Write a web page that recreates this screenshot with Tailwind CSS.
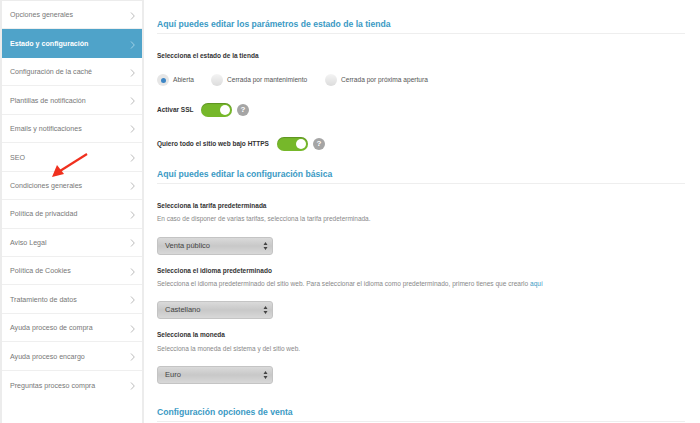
<!DOCTYPE html>
<html lang="es">
<head>
<meta charset="UTF-8" />
<title>Estado y configuración</title>
<script src="https://cdn.jsdelivr.net/npm/@tailwindcss/browser@4"></script>
</head>
<body class="bg-white font-['Liberation_Sans',Arial,sans-serif] text-[#333]">
<div class="flex h-[423px] w-[700px] overflow-hidden">

  <!-- Sidebar -->
  <aside class="w-[144px] h-full shrink-0 border-l-2 border-r-2 border-t border-[#ececec] text-[7.1px] text-[#777]">
    <a class="flex items-center justify-between h-[28.45px] pt-[2px] pl-2 pr-[7px] border-b border-[#efefef]">Opciones generales <svg class="w-[5px] h-[8px]" viewBox="0 0 5 8" fill="none" stroke="#bbb"><path d="M1 .5 4.300 4 1 7.500"/></svg></a>
    <a class="flex items-center justify-between h-[28.45px] pt-[2px] pl-2 pr-[7px] bg-[#4fa3c9] text-white font-bold">Estado y configuración <svg class="w-[5px] h-[8px]" viewBox="0 0 5 8" fill="none" stroke="#9fd0e6"><path d="M1 .5 4.300 4 1 7.500"/></svg></a>
    <a class="flex items-center justify-between h-[28.45px] pt-[2px] pl-2 pr-[7px] border-b border-[#efefef]">Configuración de la caché <svg class="w-[5px] h-[8px]" viewBox="0 0 5 8" fill="none" stroke="#bbb"><path d="M1 .5 4.300 4 1 7.500"/></svg></a>
    <a class="flex items-center justify-between h-[28.45px] pt-[2px] pl-2 pr-[7px] border-b border-[#efefef]">Plantillas de notificación <svg class="w-[5px] h-[8px]" viewBox="0 0 5 8" fill="none" stroke="#bbb"><path d="M1 .5 4.300 4 1 7.500"/></svg></a>
    <a class="flex items-center justify-between h-[28.45px] pt-[2px] pl-2 pr-[7px] border-b border-[#efefef]">Emails y notificaciones <svg class="w-[5px] h-[8px]" viewBox="0 0 5 8" fill="none" stroke="#bbb"><path d="M1 .5 4.300 4 1 7.500"/></svg></a>
    <a class="flex items-center justify-between h-[28.45px] pt-[2px] pl-2 pr-[7px] border-b border-[#efefef]">SEO <svg class="w-[5px] h-[8px]" viewBox="0 0 5 8" fill="none" stroke="#bbb"><path d="M1 .5 4.300 4 1 7.500"/></svg></a>
    <a class="flex items-center justify-between h-[28.45px] pt-[2px] pl-2 pr-[7px] border-b border-[#efefef]">Condiciones generales <svg class="w-[5px] h-[8px]" viewBox="0 0 5 8" fill="none" stroke="#bbb"><path d="M1 .5 4.300 4 1 7.500"/></svg></a>
    <a class="flex items-center justify-between h-[28.45px] pt-[2px] pl-2 pr-[7px] border-b border-[#efefef]">Política de privacidad <svg class="w-[5px] h-[8px]" viewBox="0 0 5 8" fill="none" stroke="#bbb"><path d="M1 .5 4.300 4 1 7.500"/></svg></a>
    <a class="flex items-center justify-between h-[28.45px] pt-[2px] pl-2 pr-[7px] border-b border-[#efefef]">Aviso Legal <svg class="w-[5px] h-[8px]" viewBox="0 0 5 8" fill="none" stroke="#bbb"><path d="M1 .5 4.300 4 1 7.500"/></svg></a>
    <a class="flex items-center justify-between h-[28.45px] pt-[2px] pl-2 pr-[7px] border-b border-[#efefef]">Política de Cookies <svg class="w-[5px] h-[8px]" viewBox="0 0 5 8" fill="none" stroke="#bbb"><path d="M1 .5 4.300 4 1 7.500"/></svg></a>
    <a class="flex items-center justify-between h-[28.45px] pt-[2px] pl-2 pr-[7px] border-b border-[#efefef]">Tratamiento de datos <svg class="w-[5px] h-[8px]" viewBox="0 0 5 8" fill="none" stroke="#bbb"><path d="M1 .5 4.300 4 1 7.500"/></svg></a>
    <a class="flex items-center justify-between h-[28.45px] pt-[2px] pl-2 pr-[7px] border-b border-[#efefef]">Ayuda proceso de compra <svg class="w-[5px] h-[8px]" viewBox="0 0 5 8" fill="none" stroke="#bbb"><path d="M1 .5 4.300 4 1 7.500"/></svg></a>
    <a class="flex items-center justify-between h-[28.45px] pt-[2px] pl-2 pr-[7px] border-b border-[#efefef]">Ayuda proceso encargo <svg class="w-[5px] h-[8px]" viewBox="0 0 5 8" fill="none" stroke="#bbb"><path d="M1 .5 4.300 4 1 7.500"/></svg></a>
    <a class="flex items-center justify-between h-[28.45px] pt-[2px] pl-2 pr-[7px]">Preguntas proceso compra <svg class="w-[5px] h-[8px]" viewBox="0 0 5 8" fill="none" stroke="#bbb"><path d="M1 .5 4.300 4 1 7.500"/></svg></a>
  </aside>

  <!-- Content -->
  <main class="w-[528px] ml-[13px] pt-[17px]">
    <h2 class="text-[8.6px] leading-[14px] font-bold text-[#3b9ac4] pb-[2px] border-b border-[#eee]">Aquí puedes editar los parámetros de estado de la tienda</h2>

    <p class="mt-[17px] text-[6.5px] leading-[10px] font-bold">Selecciona el estado de la tienda</p>
    <div class="flex items-center mt-[13px] text-[6.6px] text-[#555] h-[12px]">
      <span class="w-[12px] h-[12px] rounded-full bg-[#e6e6e6] flex items-center justify-center"><span class="w-[5px] h-[5px] rounded-full bg-[#3d86c6]"></span></span>
      <span class="ml-[4px] w-[38px]">Abierta</span>
      <span class="w-[12px] h-[12px] rounded-full bg-gradient-to-b from-[#f4f4f4] to-[#dcdcdc]"></span>
      <span class="ml-[4px] w-[98px]">Cerrada por mantenimiento</span>
      <span class="w-[12px] h-[12px] rounded-full bg-gradient-to-b from-[#f4f4f4] to-[#dcdcdc]"></span>
      <span class="ml-[4px]">Cerrada por próxima apertura</span>
    </div>

    <div class="flex items-center mt-[17px] h-[14px]">
      <span class="text-[6.5px] font-bold w-[44px]">Activar SSL</span>
      <span class="w-[31px] h-[14px] rounded-full bg-[#76b82a] flex items-center justify-end pr-[2px] shadow-[inset_0_1px_1px_rgba(0,0,0,0.2)]"><span class="w-[10px] h-[10px] rounded-full bg-white"></span></span>
      <span class="ml-[5px] w-[12px] h-[12px] rounded-full bg-[#a5a5a5] text-white text-[8px] font-bold flex items-center justify-center">?</span>
    </div>
    <div class="flex items-center mt-[20px] h-[14px]">
      <span class="text-[6.5px] font-bold w-[120px]">Quiero todo el sitio web bajo HTTPS</span>
      <span class="w-[31px] h-[14px] rounded-full bg-[#76b82a] flex items-center justify-end pr-[2px] shadow-[inset_0_1px_1px_rgba(0,0,0,0.2)]"><span class="w-[10px] h-[10px] rounded-full bg-white"></span></span>
      <span class="ml-[5px] w-[12px] h-[12px] rounded-full bg-[#a5a5a5] text-white text-[8px] font-bold flex items-center justify-center">?</span>
    </div>

    <h2 class="mt-[16px] text-[8.6px] leading-[14px] font-bold text-[#3b9ac4] pb-[2px] border-b border-[#eee]">Aquí puedes editar la configuración básica</h2>

    <p class="mt-[17px] text-[6.5px] leading-[10px] font-bold">Selecciona la tarifa predeterminada</p>
    <p class="mt-[3px] text-[6.5px] leading-[10px] text-[#888]">En caso de disponer de varias tarifas, selecciona la tarifa predeterminada.</p>
    <div class="mt-[13px] w-[116px] h-[18px] rounded-[3px] bg-gradient-to-b from-[#dadada] via-[#c8c8c8] to-[#d8d8d8] border border-[#c4c4c4] flex items-center justify-between pl-[7px] pr-[4px] text-[7.5px] text-[#444]">Venta público <svg class="w-[5px] h-[8px]" viewBox="0 0 5 8" fill="#444"><path d="M2.500 0 4.500 3H.5zM2.500 8 .5 5h4z"/></svg></div>

    <p class="mt-[11px] text-[6.5px] leading-[10px] font-bold">Selecciona el idioma predeterminado</p>
    <p class="mt-[3px] text-[6.55px] leading-[10px] text-[#888]">Selecciona el idioma predeterminado del sitio web. Para seleccionar el idioma como predeterminado, primero tienes que crearlo <a class="text-[#3b9ac4]">aquí</a></p>
    <div class="mt-[12px] w-[116px] h-[18px] rounded-[3px] bg-gradient-to-b from-[#dadada] via-[#c8c8c8] to-[#d8d8d8] border border-[#c4c4c4] flex items-center justify-between pl-[7px] pr-[4px] text-[7.5px] text-[#444]">Castellano <svg class="w-[5px] h-[8px]" viewBox="0 0 5 8" fill="#444"><path d="M2.500 0 4.500 3H.5zM2.500 8 .5 5h4z"/></svg></div>

    <p class="mt-[11px] text-[6.5px] leading-[10px] font-bold">Selecciona la moneda</p>
    <p class="mt-[4px] text-[6.5px] leading-[10px] text-[#888]">Selecciona la moneda del sistema y del sitio web.</p>
    <div class="mt-[12px] w-[116px] h-[18px] rounded-[3px] bg-gradient-to-b from-[#dadada] via-[#c8c8c8] to-[#d8d8d8] border border-[#c4c4c4] flex items-center justify-between pl-[7px] pr-[4px] text-[7.5px] text-[#444]">Euro <svg class="w-[5px] h-[8px]" viewBox="0 0 5 8" fill="#444"><path d="M2.500 0 4.500 3H.5zM2.500 8 .5 5h4z"/></svg></div>

    <h2 class="mt-[21px] text-[8.6px] leading-[14px] font-bold text-[#3b9ac4] pb-[2px] border-b border-[#eee]">Configuración opciones de venta</h2>
  </main>
</div>

<!-- Red annotation arrow drawn over the sidebar -->
<svg class="absolute left-[50px] top-[150px] w-[40px] h-[32px]" viewBox="0 0 40 32" fill="none">
  <path d="M37 4 10 21" stroke="#f0301e" stroke-width="2.200"/>
  <path d="M2 27 7 15 14 24z" fill="#f0301e"/>
</svg>
</body>
</html>
